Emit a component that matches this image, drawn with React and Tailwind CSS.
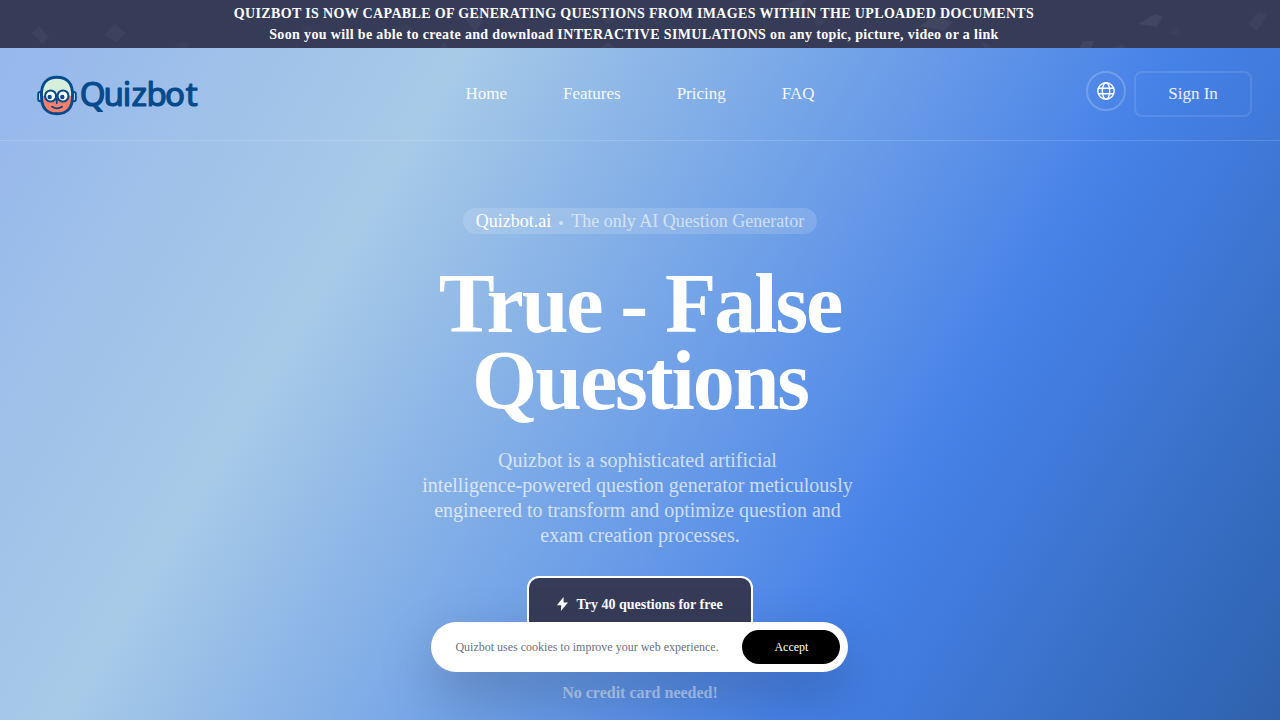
import React from 'react';

const navLinks = ['Home', 'Features', 'Pricing', 'FAQ'];

// faint confetti pieces behind the announcement text
const confetti = [
    { points: '32,33 39,26 49,37 42,44', opacity: 0.04 },
    { points: '104,35 115,24 126,33 116,42', opacity: 0.03 },
    { points: '174,44 189,41 188,48 178,48', opacity: 0.02 },
    { points: '300,29 308,24 315,30 306,33', opacity: 0.02 },
    { points: '396,28 406,24 412,29 404,32', opacity: 0.02 },
    { points: '466,20 474,12 483,18 476,32', opacity: 0.04 },
    { points: '440,48 444,41 448,48', opacity: 0.04 },
    { points: '602,20 610,12 617,17 608,24', opacity: 0.03 },
    { points: '648,14 658,22 668,14 658,25', opacity: 0.03 },
    { points: '600,48 608,42 616,48', opacity: 0.04 },
    { points: '784,6 795,0 806,0 800,8', opacity: 0.04 },
    { points: '812,12 826,22 817,28', opacity: 0.03 },
    { points: '920,26 934,16 953,22 944,31', opacity: 0.05 },
    { points: '982,42 994,47 984,48', opacity: 0.04 },
    { points: '1138,24 1155,14 1163,17 1157,27', opacity: 0.05 },
    { points: '1168,34 1176,27 1182,37', opacity: 0.02 },
    { points: '1080,48 1083,41 1094,41 1091,48', opacity: 0.05 },
    { points: '1112,48 1122,44 1126,48', opacity: 0.04 },
    { points: '1248,24 1258,12 1267,15 1257,31', opacity: 0.03 },
];

function AnnouncementBar() {
    return (
        <div className="relative h-12 overflow-hidden bg-[#363c58] text-center text-sm font-bold text-white">
            <svg className="absolute inset-0" width="1280" height="48" viewBox="0 0 1280 48" fill="#fff">
                {confetti.map((c) => (
                    <polygon key={c.points} points={c.points} opacity={c.opacity} />
                ))}
            </svg>
            <div className="relative w-[1268px] pt-[3px] leading-[21px] tracking-wide">
                <p>QUIZBOT IS NOW CAPABLE OF GENERATING QUESTIONS FROM IMAGES WITHIN THE UPLOADED DOCUMENTS</p>
                <p>Soon you will be able to create and download INTERACTIVE SIMULATIONS on any topic, picture, video or a link</p>
            </div>
        </div>
    );
}

function Logo() {
    return (
        <svg className="overflow-visible" width="180" height="48" viewBox="0 0 180 48">
            {/* ears */}
            <g fill="#e9f4f5" stroke="#054a8c" strokeWidth="2">
                <rect x="2.200" y="18" width="5" height="9.200" rx="2" />
                <rect x="34.800" y="18" width="5" height="9.200" rx="2" />
            </g>
            <path d="M5.500 22C4.800 9.500 11 3.200 21 3.200S37.200 9.500 36.500 22C36.800 34 31 39.800 21 39.800S5.200 34 5.500 22Z" fill="#d5efdc" />
            <path d="M5.500 22H36.500C36.800 34 31 39.800 21 39.800S5.200 34 5.500 22Z" fill="#ff7f68" />
            <path d="M5.500 22C4.800 9.500 11 3.200 21 3.200S37.200 9.500 36.500 22C36.800 34 31 39.800 21 39.800S5.200 34 5.500 22Z" fill="none" stroke="#054a8c" strokeWidth="2.900" />
            {/* glasses */}
            <g fill="#fff" stroke="#054a8c" strokeWidth="2.100">
                <circle cx="14.600" cy="22" r="5.500" />
                <circle cx="27" cy="22" r="5.500" />
            </g>
            <g fill="#054a8c">
                <circle cx="13.700" cy="23" r="2.200" />
                <circle cx="26.300" cy="23" r="2.200" />
            </g>
            <path d="M20.800 21.500V29.200M16 32.800Q21 36 26.200 32.800" fill="none" stroke="#054a8c" strokeWidth="1.800" strokeLinecap="round" />
            {/* word mark */}
            <text
                x="43.700 67.600 86.700 95.500 110.500 129 149.700"
                y="32.200"
                fontFamily="'Noto Sans', sans-serif"
                fontSize="33"
                fontWeight="400"
                fill="#054a8c"
                stroke="#054a8c"
                strokeWidth="1.200"
                strokeLinejoin="round"
            >
                Quizbot
            </text>
        </svg>
    );
}

function GlobeIcon() {
    return (
        <svg width="18" height="18" viewBox="0 0 18 18" fill="none" stroke="currentColor" strokeWidth="1.400">
            <circle cx="9" cy="9" r="8.200" />
            <ellipse cx="9" cy="9" rx="3.700" ry="8.200" />
            <path d="M1.500 6.200H16.500M1.500 11.800H16.500" />
        </svg>
    );
}

function Header() {
    return (
        <header className="relative flex h-[93px] items-start justify-between border-b border-white/15 pl-9 pr-7 pt-[23px]">
            <div className="flex h-12 w-[284px] pt-[3px]">
                <Logo />
            </div>
            <nav className="flex gap-14 pt-[10px] text-[17px] leading-[25px] text-white/95">
                {navLinks.map((link) => (
                    <a key={link} href="#">{link}</a>
                ))}
            </nav>
            <div className="flex w-[292px] items-start justify-end gap-2">
                <button className="flex size-10 items-center justify-center rounded-full border-2 border-white/20 text-white">
                    <GlobeIcon />
                </button>
                <button className="h-[46px] w-[118px] rounded-lg border-2 border-white/10 text-[17px] text-white/90">
                    Sign In
                </button>
            </div>
        </header>
    );
}

function Hero() {
    return (
        <section className="flex flex-col items-center pt-[67px] text-center">
            <div className="flex h-[26px] items-center rounded-full bg-white/15 px-[13px] text-lg text-white">
                <span>Quizbot.ai</span>
                <span className="mx-2 mt-1 size-1 rounded-full bg-white/50" />
                <span className="text-white/60">The only AI Question Generator</span>
            </div>
            <h1 className="mt-[31px] w-[600px] text-[84px] font-bold leading-[77px] tracking-tight text-white">
                True - False
                <br />
                Questions
            </h1>
            <p className="mt-[29px] w-[440px] text-xl leading-[25px] text-white/70">
                Quizbot is a sophisticated artificial&nbsp;
                <br />
                intelligence-powered question generator meticulously&nbsp;
                <br />
                engineered to transform and optimize question and&nbsp;
                <br />
                exam creation processes.
            </p>
            <button className="mt-7 flex h-[58px] w-[226px] items-center justify-center gap-[7px] rounded-xl border-2 border-white bg-[#363c58] pr-0.5 text-sm font-bold text-white">
                <svg className="-mt-0.5" width="14" height="14" viewBox="0 0 14 14" fill="currentColor">
                    <path d="M8.600 0L1.800 8.300H6.200L5.900 13.900L13 5.400H8.600Z" />
                </svg>
                Try 40 questions for free
            </button>
            <p className="mt-[47px] text-base font-bold text-white/50">No credit card needed!</p>
        </section>
    );
}

function CookieBanner() {
    return (
        <div className="absolute bottom-12 left-[431.4px] flex h-[50px] w-[417px] items-center justify-between rounded-full bg-white pl-6 pr-2 text-xs shadow-[0_22px_56px_rgba(0,0,0,0.21)]">
            <span className="text-gray-500">Quizbot uses cookies to improve your web experience.</span>
            <button className="h-[34px] w-[98px] rounded-full bg-black text-white">Accept</button>
        </div>
    );
}

export default function App() {
    return (
        <div className="relative h-[720px] w-full overflow-hidden bg-[linear-gradient(121deg,#95b6ec_0px,#a7cae7_423px,#4681e7_1040px,#2d61ab_1480px)] font-['Liberation_Serif',serif]">
            <AnnouncementBar />
            <Header />
            <Hero />
            <CookieBanner />
        </div>
    );
}
